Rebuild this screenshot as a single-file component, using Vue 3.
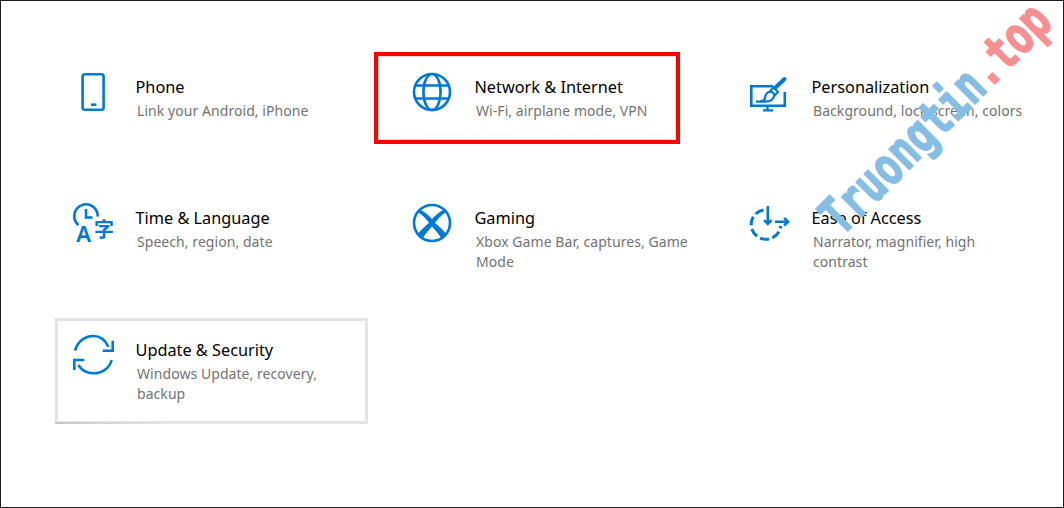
<script setup>
const tiles = [
  { id: 'phone', title: 'Phone', desc: 'Link your Android, iPhone' },
  { id: 'network', title: 'Network & Internet', desc: 'Wi-Fi, airplane mode, VPN', marked: true },
  { id: 'brush', title: 'Personalization', desc: 'Background, lock screen, colors' },
  { id: 'time', title: 'Time & Language', desc: 'Speech, region, date' },
  { id: 'xbox', title: 'Gaming', desc: 'Xbox Game Bar, captures, Game Mode' },
  { id: 'ease', title: 'Ease of Access', desc: 'Narrator, magnifier, high contrast' },
  { id: 'update', title: 'Update & Security', desc: 'Windows Update, recovery, backup', hovered: true },
]
</script>

<template>
  <main class="page">
    <section class="grid">
      <article
        v-for="t in tiles"
        :key="t.id"
        class="tile"
        :class="{ hovered: t.hovered, marked: t.marked }"
      >
        <svg class="icon" width="48" height="48" viewBox="0 0 48 48" fill="none" stroke="#0078d7" stroke-width="2.6">
          <template v-if="t.id === 'phone'">
            <rect x="12.6" y="9.3" width="21" height="35.5" rx="2.2" />
            <path d="M21 39.7h5.4" />
          </template>
          <template v-else-if="t.id === 'network'">
            <circle cx="23" cy="27" r="18" />
            <ellipse cx="23" cy="27" rx="8.6" ry="18" />
            <path d="M6.5 20.5h33M6.500 33.500h33" />
          </template>
          <template v-else-if="t.id === 'brush'">
            <path d="M27 21.300H5.300v19.500h33.500V27" />
            <path d="M21.500 41v4M17 45.300h10" stroke-width="2.200" />
            <path d="M38.500 14 29 23" stroke-width="4" stroke-linecap="round" />
            <path d="M24.500 25.500 27.500 22.500 32 27 29 30Z" stroke-width="2" />
            <path d="M25 27c-4-.5-5.800 2.500-5.800 5.300 0 2.900-2.800 4.400-9.200 4.400h8.500c5.500 0 9.500-2.200 9.800-7" stroke-width="2.200" />
          </template>
          <template v-else-if="t.id === 'time'">
            <path d="M8.500 29A11.700 11.700 0 1 1 27.700 20.500" />
            <path d="M16 13v8.500h6.500" />
            <text class="glyph-a" x="6.200" y="45.700">A</text>
            <text class="glyph-zi" x="24" y="41">字</text>
          </template>
          <template v-else-if="t.id === 'xbox'">
            <circle cx="23" cy="27" r="18" />
            <path fill="#0078d7" stroke="none" d="M10.500 13.500Q16 15.500 23 23 30 15.500 35.500 13.500L37.500 15.500Q31 20 26 26.800 33 33 38 38.500L33 43Q29 37 23 30.500 17 37 13 43L8 38.500Q13 33 20 26.800 15 20 8.500 15.500Z" />
          </template>
          <template v-else-if="t.id === 'ease'">
            <path d="M17.500 13.900A14.800 14.800 0 1 0 34.700 30" stroke-width="3" stroke-dasharray="9 3.600" />
            <path d="M21.800 10V28M18 24.200l3.800 3.800 3.800-3.800" />
            <path d="M29 25.700h13M38.200 21.900l3.800 3.800-3.800 3.800" />
          </template>
          <template v-else>
            <path d="M5 22.700C7.400 14 14.500 8 23.300 8c6.400 0 11.800 3.800 15 10.700" />
            <path d="M42.700 12.700v10H32.700" />
            <path d="M41.700 32C39.300 40.500 32 45.300 23.300 45.300c-6.400 0-11.700-3.200-15-8.300" />
            <path d="M4.300 42V32h10" />
          </template>
        </svg>
        <div class="copy">
          <h2 class="title">{{ t.title }}</h2>
          <p class="desc">{{ t.desc }}</p>
        </div>
      </article>
    </section>
    <div class="watermark"><span class="blue">Truongtin</span><span class="pink">.top</span></div>
  </main>
</template>

<style scoped>
.page {
  position: relative;
  box-sizing: border-box;
  width: 1064px;
  height: 508px;
  border: 1px solid #1c1c1c;
  background: #fff;
  overflow: hidden;
  font-family: "Noto Sans", "Open Sans", sans-serif;
}
.grid {
  display: grid;
  grid-template-columns: 339px 337px 312px;
  grid-template-rows: 131px 132px 106px;
  padding: 54px 0 0 55px;
}
.tile {
  position: relative;
  box-sizing: border-box;
  width: 312px;
  height: 106px;
  display: flex;
  align-items: flex-start;
  padding: 10px 0 0 14px;
  gap: 18px;
}
.tile.hovered {
  width: 313px;
  margin-left: -1px;
  padding-left: 15px;
  outline: 3px solid #e4e4e4;
  outline-offset: -3px;
}
.tile.hovered::after {
  content: "";
  position: absolute;
  left: 0;
  bottom: 0;
  width: 110px;
  height: 2px;
  background: linear-gradient(90deg, #c8c8c8, #e4e4e4);
}
.tile.marked::after {
  content: "";
  position: absolute;
  left: -21px;
  top: -3px;
  width: 306px;
  height: 92px;
  box-sizing: border-box;
  border: 4px solid #fe0000;
  box-shadow: inset 0 0 0 1px #ead6d6;
}
.icon {
  flex: none;
  overflow: visible;
}
.copy {
  width: 216px;
  padding-top: 11px;
}
.title {
  margin: 0 0 0 -0.5px;
  font-size: 16.300px;
  font-weight: 400;
  line-height: 22px;
  color: #000;
}
.desc {
  margin: 3px 0 0 1px;
  font-size: 14px;
  letter-spacing: 0.06px;
  line-height: 20px;
  color: #737373;
}
.glyph-a {
  font-family: "Noto Sans", sans-serif;
  font-size: 22px;
  font-weight: 600;
  fill: #0078d7;
  stroke: none;
}
.glyph-zi {
  font-family: "Noto Sans CJK SC", sans-serif;
  font-size: 20px;
  font-weight: 700;
  fill: #0078d7;
  stroke: none;
}
.watermark {
  position: absolute;
  left: 846px;
  top: 190px;
  transform: rotate(-45deg) scaleX(0.74);
  transform-origin: 0 100%;
  font-family: "DejaVu Sans Mono", monospace;
  font-size: 52px;
  font-weight: 700;
  line-height: 1;
  white-space: nowrap;
  -webkit-text-stroke: 1.6px currentColor;
  pointer-events: none;
}
.blue {
  color: #85bde3;
}
.pink {
  color: #f68f92;
}
</style>
